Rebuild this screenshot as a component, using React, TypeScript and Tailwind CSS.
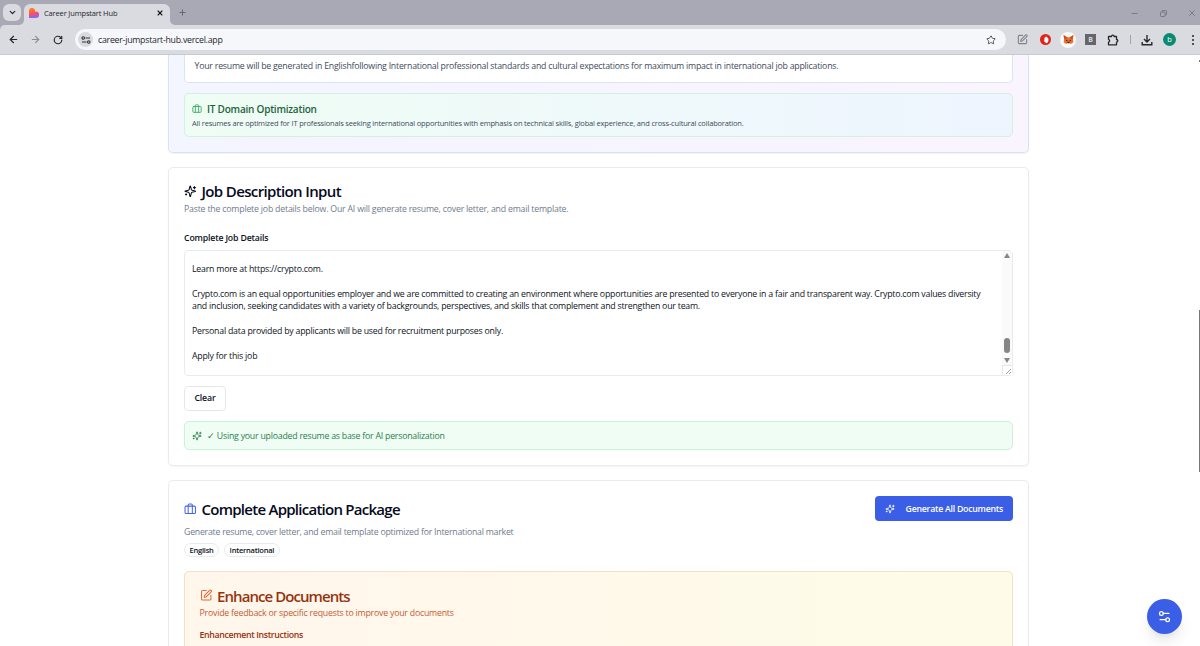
import React from 'react';
import { ArrowLeft, ArrowRight, Briefcase, ChevronDown, Minus, Plus, RotateCw, Settings2, SquarePen, Star, X } from 'lucide-react';

function Sparkles({ className }: { className: string }) {
  return (
    <svg viewBox="0 0 24 24" fill="none" stroke="currentColor" strokeWidth="2" strokeLinecap="round" strokeLinejoin="round" className={className}>
      <path d="M9.937 15.5A2 2 0 0 0 8.5 14.063l-6.135-1.582a.5.5 0 0 1 0-.962L8.5 9.936A2 2 0 0 0 9.937 8.5l1.582-6.135a.5.5 0 0 1 .963 0L14.063 8.5A2 2 0 0 0 15.5 9.937l6.135 1.581a.5.5 0 0 1 0 .964L15.5 14.063a2 2 0 0 0-1.437 1.437l-1.582 6.135a.5.5 0 0 1-.963 0z" />
      <path d="M20 3v4M22 5h-4M4 17v2M5 18H3" />
    </svg>
  );
}

function Fox() {
  return (
    <svg viewBox="0 0 20 20" className="h-[11px] w-[11px]">
      <path d="M1 2l7 4h4l7-4-1 8 1 5-5 3-4-3-4 3-5-3 1-5z" fill="#f0712c" />
      <path d="M1 2l7 5-5 3zM19 2l-7 5 5 3z" fill="#c4501f" />
      <path d="M5 10l4 2-3 1zM15 10l-4 2 3 1zM8 14h4v3H8z" fill="#2b2b35" />
    </svg>
  );
}

function TabStrip() {
  return (
    <div className="flex h-[25px] items-start bg-[#a8a9b5]">
      <div className="mt-[4px] ml-[3px] flex h-[17px] w-[18px] items-center justify-center rounded-[6px] bg-[#dadbe1]">
        <ChevronDown className="h-[9px] w-[9px] text-[#222]" strokeWidth={3.2} />
      </div>
      <div className="-ml-[2px] h-[5px] w-[5px] self-end bg-[#dadbe1]">
        <div className="h-full w-full rounded-br-[5px] bg-[#a8a9b5]" />
      </div>
      <div className="mt-[4px] flex h-[21px] w-[146px] items-center rounded-t-[6px] bg-[#dadbe1] pr-[6px] pb-[3px] pl-[5px]">
        <svg viewBox="0 0 20 20" className="h-[10px] w-[10px]">
          <defs>
            <linearGradient id="heart" x1="0.2" y1="0" x2="0.4" y2="1">
              <stop offset="0.2" stopColor="#ff7a1a" />
              <stop offset="0.6" stopColor="#fb4a6b" />
              <stop offset="1" stopColor="#7a6cff" />
            </linearGradient>
          </defs>
          <path d="M6 0a6 6 0 0 1 6 6v1h2a6 6 0 0 1 0 13H0V6a6 6 0 0 1 6-6z" fill="url(#heart)" />
        </svg>
        <span className="ml-[5px] pt-px text-[7.5px] tracking-[-0.15px] whitespace-nowrap text-[#26272b]">Career Jumpstart Hub</span>
        <X className="ml-auto h-[8px] w-[8px] text-[#1c1c1f]" strokeWidth={3.4} />
      </div>
      <div className="h-[5px] w-[5px] self-end bg-[#dadbe1]">
        <div className="h-full w-full rounded-bl-[5px] bg-[#a8a9b5]" />
      </div>
      <Plus className="mt-[8px] ml-[3px] h-[9px] w-[9px] text-[#62636d]" strokeWidth={2.5} />
      <div className="mt-[8px] ml-auto flex items-center">
        <Minus className="mr-[20px] h-[9px] w-[9px] text-[#6b6c76]" strokeWidth={2} />
        <svg viewBox="0 0 12 12" fill="none" stroke="#6b6c76" className="mr-[19px] h-[9px] w-[9px]">
          <rect x="2" y="4" width="6" height="6" rx="1" />
          <path d="M4 4V3q0-1 1-1h4q1 0 1 1v4q0 1-1 1H8" />
        </svg>
        <X className="mr-[3px] h-[10px] w-[10px] text-[#6b6c76]" strokeWidth={1.8} />
      </div>
    </div>
  );
}

function Toolbar() {
  return (
    <div className="bg-[#a8a9b5]">
      <div className="flex h-[30px] items-center rounded-tl-[5px] border-b border-[#c9cad0] bg-[#dadbe1] text-[#27282c]">
        <ArrowLeft className="ml-[8px] h-[11px] w-[11px]" strokeWidth={2.6} />
        <ArrowRight className="ml-[11px] h-[11px] w-[11px] text-[#8b8c95]" strokeWidth={2.4} />
        <RotateCw className="ml-[12px] h-[10px] w-[10px]" strokeWidth={2.8} />
        <div className="ml-[12px] flex h-[21px] w-[931px] items-center rounded-full bg-[#f5f7fb] pr-[10px] pl-[3px]">
          <div className="flex h-[15px] w-[15px] items-center justify-center rounded-full bg-[#d8dade]">
            <svg viewBox="0 0 20 20" fill="none" stroke="#333" strokeWidth="2.2" className="h-[10px] w-[10px]">
              <circle cx="4.5" cy="6" r="2.5" />
              <path d="M9 6h9M2 14h9" />
              <circle cx="15.5" cy="14" r="2.5" />
            </svg>
          </div>
          <span className="ml-[5px] pt-[2px] text-[8.75px] tracking-[-0.24px] text-[#27282c]">career-jumpstart-hub.vercel.app</span>
          <Star className="ml-auto h-[10px] w-[10px] text-[#3c3d42]" strokeWidth={2} />
        </div>
        <SquarePen className="ml-[11px] h-[11px] w-[11px] text-[#83848c]" strokeWidth={2.4} />
        <div className="ml-[12px] flex h-[11px] w-[11px] items-center justify-center rounded-full bg-[#e2231a]">
          <svg viewBox="0 0 10 10" className="h-[8px] w-[8px]">
            <path d="M2 5l1 .5V2.2h1V1h2v1h1.2v1H8v3.4Q7.5 9 5.4 9 3.6 9 2 5z" fill="#fff" />
          </svg>
        </div>
        <div className="ml-[9px] flex h-[16px] w-[16px] items-center justify-center rounded-full bg-[#fafafa]">
          <Fox />
        </div>
        <div className="ml-[9px] flex h-[11px] w-[11px] items-center justify-center bg-[#65666a] text-[7px] leading-none font-bold text-[#d5d5d8]">B</div>
        <svg viewBox="0 0 12 12" fill="none" stroke="currentColor" strokeWidth="1.3" strokeLinejoin="round" className="ml-[11px] h-[12px] w-[12px]">
          <path d="M1.5 2.5h3a1.3 1.3 0 0 1 2.6 0h2.4v3a1.3 1.3 0 0 1 0 2.6v2.700h-8V8.2a1.5 1.5 0 0 0 0-2.9z" />
        </svg>
        <div className="ml-[11px] h-[9px] w-px bg-[#a3a4ab]" />
        <svg viewBox="0 0 12 12" fill="none" stroke="currentColor" strokeWidth="1.4" className="ml-[10px] h-[12px] w-[12px]">
          <path d="M6 1v6.500M3 5l3 3 3-3M1.2 8v2.8h9.6V8" />
        </svg>
        <div className="ml-[10px] flex h-[13px] w-[13px] items-center justify-center rounded-full bg-[#0b8a73] text-[7.5px] leading-none text-white">b</div>
        <div className="ml-[16px] flex flex-col gap-[2px]">
          <i className="h-[2px] w-[2px] rounded-full bg-[#222]" />
          <i className="h-[2px] w-[2px] rounded-full bg-[#222]" />
          <i className="h-[2px] w-[2px] rounded-full bg-[#222]" />
        </div>
      </div>
    </div>
  );
}

function JobDetails() {
  return (
    <div className="mt-[5px] flex h-[126px] rounded-[4px] border border-[#e8ebf0] bg-white">
      <div className="flex-1 pt-[11.5px] pl-[7px] text-[8.75px] leading-[12.5px] tracking-[-0.213px] whitespace-pre text-[#0c1222]">
        {`Learn more at https://crypto.com.

Crypto.com is an equal opportunities employer and we are committed to creating an environment where opportunities are presented to everyone in a fair and transparent way. Crypto.com values diversity
and inclusion, seeking candidates with a variety of backgrounds, perspectives, and skills that complement and strengthen our team.

Personal data provided by applicants will be used for recruitment purposes only.

Apply for this job`}
      </div>
      <div className="flex w-[10px] flex-col items-center bg-[#fafafb]">
        <svg viewBox="0 0 6 5" className="mt-[2px] h-[5px] w-[6px]"><path d="M3 0l3 5H0z" fill="#858688" /></svg>
        <div className="mt-[80px] h-[15px] w-[6px] rounded-full bg-[#858688]" />
        <svg viewBox="0 0 6 5" className="mt-[5px] h-[5px] w-[6px]"><path d="M3 5l3-5H0z" fill="#858688" /></svg>
        <div className="mt-[2px] flex h-[10px] w-[10px] items-end justify-end border-t border-l border-[#e4e8ee] bg-white">
          <svg viewBox="0 0 7 7" stroke="#77787c" strokeWidth="0.7" className="h-[7px] w-[7px]"><path d="M1 6l5-5M4 6l2-2" /></svg>
        </div>
      </div>
    </div>
  );
}

export default function App() {
  return (
    <div className="relative h-[646px] w-full overflow-hidden bg-white font-['Open_Sans','Noto_Sans',sans-serif]">
      <TabStrip />
      <Toolbar />
      <main className="ml-[168px] w-[861px]">
        <section className="rounded-b-[5px] border border-t-0 border-[#d8e2f7] bg-linear-to-r from-[#f3f5ff] to-[#faf4ff] px-[15px] pb-[15px] shadow-xs">
          <div className="h-[27.5px] rounded-b-[5px] border border-t-0 border-[#d9e4f6] bg-white pl-[9.5px] text-[8.75px] leading-[22px] tracking-[-0.217px] whitespace-nowrap text-[#414b5a]">
            Your resume will be generated in Englishfollowing International professional standards and cultural expectations for maximum impact in international job applications.
          </div>
          <div className="mt-[10px] h-[44px] rounded-[5px] border border-[#d3f0e1] bg-linear-to-r from-[#effdf4] to-[#eef5ff] px-[7px] pt-[8px]">
            <div className="flex items-center gap-[5px] text-[#21643c]">
              <Briefcase className="h-[10px] w-[10px] text-[#2ca45b]" />
              <h4 className="text-[10px] leading-[14px] font-semibold tracking-[-0.23px]">IT Domain Optimization</h4>
            </div>
            <p className="mt-[2.5px] text-[7.5px] leading-[11px] tracking-[-0.177px] whitespace-nowrap text-[#414b5a]">All resumes are optimized for IT professionals seeking international opportunities with emphasis on technical skills, global experience, and cross-cultural collaboration.</p>
          </div>
        </section>

        <section className="mt-[14.5px] h-[299px] rounded-[5px] border border-[#e9ebf1] bg-white px-[15px] shadow-xs">
          <div className="flex items-center gap-[5px] pt-[13px] text-[#050a1c]">
            <Sparkles className="h-[12.5px] w-[12.5px]" />
            <h3 className="text-[15px] leading-[20px] font-semibold tracking-[-0.64px]">Job Description Input</h3>
          </div>
          <p className="pt-[1.5px] text-[8.75px] leading-[13px] tracking-[-0.2px] text-[#6f7b8d]">Paste the complete job details below. Our AI will generate resume, cover letter, and email template.</p>
          <label className="mt-[16.5px] block text-[8.75px] leading-[13px] font-semibold tracking-[-0.17px] text-[#0c1222]">Complete Job Details</label>
          <JobDetails />
          <button className="mt-[10px] block h-[25px] w-[42px] rounded-[4px] border border-[#e4e8ee] pt-px text-[8.75px] font-semibold tracking-[-0.15px] text-[#0c1222]">Clear</button>
          <div className="mt-[10px] flex h-[29px] items-center gap-[5px] rounded-[5px] border border-[#c9f2d7] bg-[#effdf4] pl-[7px] text-[8.75px] tracking-[-0.22px] text-[#2a7f4a]">
            <Sparkles className="h-[10px] w-[10px]" />
            <span className="pt-[2px]">✓ Using your uploaded resume as base for AI personalization</span>
          </div>
        </section>

        <section className="mt-[14px] h-[200px] rounded-[5px] border border-[#e9ebf1] bg-white px-[15px] pt-[15px]">
          <div className="flex items-start justify-between">
            <div>
              <div className="flex items-center gap-[5px] pt-[3px] text-[#050a1c]">
                <Briefcase className="h-[12.5px] w-[12.5px] text-[#4564ea]" />
                <h3 className="text-[15px] leading-[20px] font-semibold tracking-[-0.74px]">Complete Application Package</h3>
              </div>
              <p className="mt-[6.5px] text-[8.75px] leading-[13px] tracking-[-0.235px] text-[#6f7b8d]">Generate resume, cover letter, and email template optimized for International market</p>
              <div className="mt-[4.5px] flex gap-[5px] text-[7.5px] leading-[12px] font-semibold tracking-[-0.23px] text-[#0c1222]">
                <span className="rounded-full border border-[#e7ebf1] px-[4.5px]">English</span>
                <span className="rounded-full border border-[#e7ebf1] px-[4.5px]">International</span>
              </div>
            </div>
            <button className="flex h-[25px] w-[138px] items-center justify-between rounded-[4px] bg-[#3a5ee6] px-[10px] text-[8.75px] font-semibold tracking-[-0.25px] whitespace-nowrap text-white">
              <Sparkles className="h-[10px] w-[10px]" />
              <span className="pt-[2px]">Generate All Documents</span>
            </button>
          </div>
          <div className="mt-[14px] h-[160px] rounded-[5px] border border-[#f7dfc0] bg-linear-to-r from-[#fff6ec] to-[#fefce8] px-[14.5px] pt-[13.5px]">
            <div className="flex items-center gap-[5px] text-[#97320f]">
              <SquarePen className="h-[12.5px] w-[12.5px] text-[#e06a35]" />
              <h3 className="text-[15px] leading-[20px] font-semibold tracking-[-0.93px]">Enhance Documents</h3>
            </div>
            <p className="pt-[1.5px] text-[8.75px] leading-[13px] tracking-[-0.21px] text-[#c65a34]">Provide feedback or specific requests to improve your documents</p>
            <label className="mt-[9px] block text-[8.75px] leading-[13px] font-semibold tracking-[-0.33px] text-[#97320f]">Enhancement Instructions</label>
          </div>
        </section>
      </main>

      <button className="absolute right-[18px] bottom-[12px] flex h-[35px] w-[35px] items-center justify-center rounded-full bg-[#3a5ee6] text-white shadow-lg">
        <Settings2 className="h-[15px] w-[15px]" />
      </button>
      <div className="absolute top-[310px] right-0 h-[162px] w-px bg-[#77787c]" />
      <div className="absolute top-[60px] right-0 h-[2px] w-px bg-[#77787c]" />
    </div>
  );
}
